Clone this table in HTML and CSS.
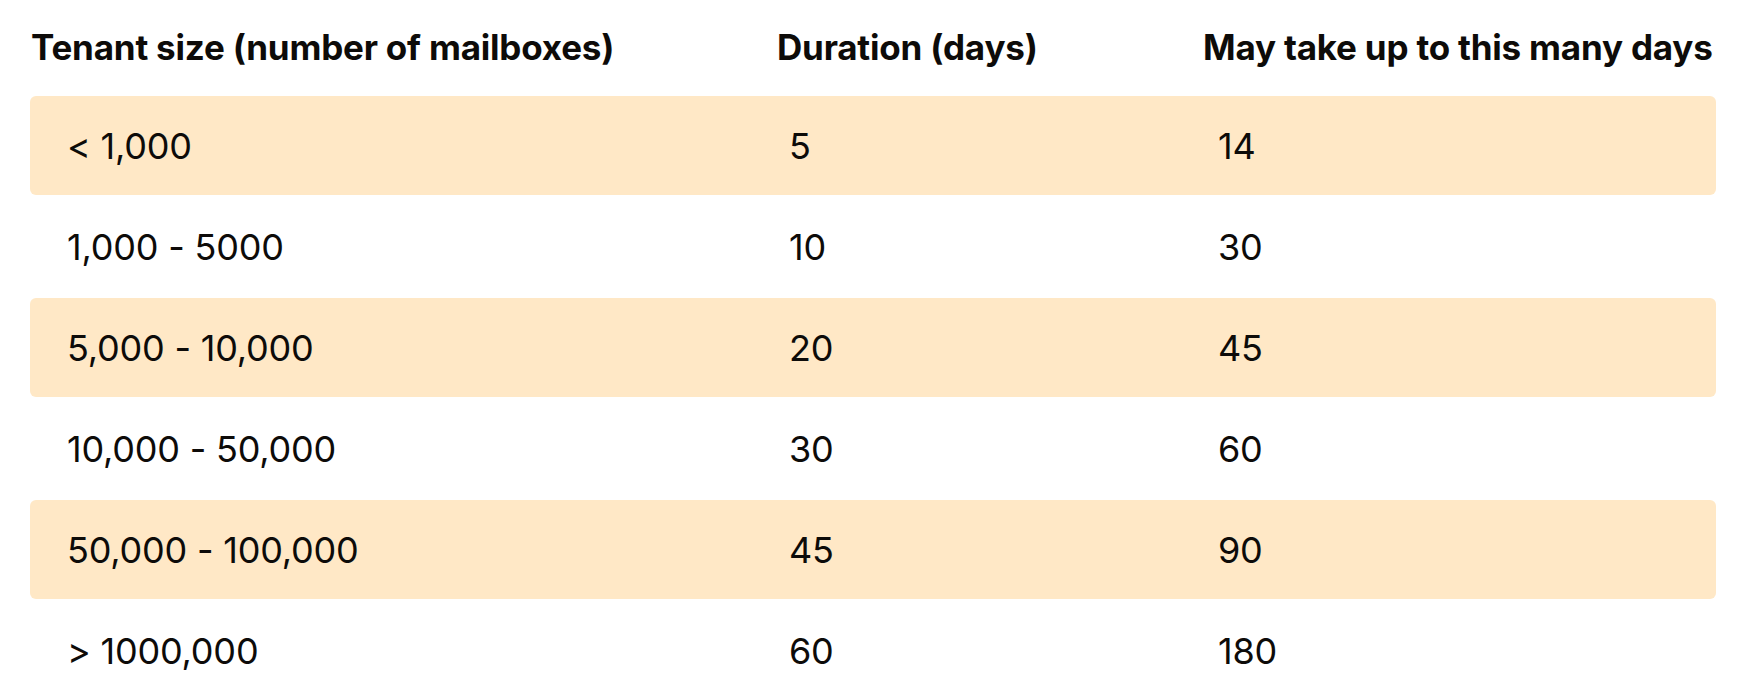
FILE: index.html
```html
<!DOCTYPE html>
<html lang="en">
<head>
<meta charset="utf-8">
<title>Tenant size durations</title>
<link rel="stylesheet" href="styles.css">
</head>
<body>
<div class="table">
  <div class="head">
    <div class="th">Tenant size (number of mailboxes)</div>
    <div class="th">Duration (days)</div>
    <div class="th">May take up to this many days</div>
  </div>
  <div class="row alt"><div>&lt; 1,000</div><div>5</div><div>14</div></div>
  <div class="row"><div>1,000 - 5000</div><div>10</div><div>30</div></div>
  <div class="row alt"><div>5,000 - 10,000</div><div>20</div><div>45</div></div>
  <div class="row"><div>10,000 - 50,000</div><div>30</div><div>60</div></div>
  <div class="row alt"><div>50,000 - 100,000</div><div>45</div><div>90</div></div>
  <div class="row"><div>&gt; 1000,000</div><div>60</div><div>180</div></div>
</div>
</body>
</html>
```

FILE: styles.css
```css
html, body {
  margin: 0;
  padding: 0;
  background: #ffffff;
}
body {
  font-family: Inter, Roboto, "Liberation Sans", sans-serif;
  color: #0d0b09;
}
.table {
  width: 1686px;
  margin-left: 30px;
  display: flex;
  flex-direction: column;
  gap: 2px;
}
.head {
  height: 94px;
  display: grid;
  grid-template-columns: 746px 426px 1fr;
  align-items: center;
  padding-left: 1px;
  font-weight: 700;
  font-size: 35px;
  letter-spacing: -0.2px;
  white-space: nowrap;
}
.row {
  height: 99px;
  display: grid;
  grid-template-columns: 722px 429px 1fr;
  align-items: center;
  padding-left: 37px;
  font-size: 36px;
  letter-spacing: -0.2px;
  border-radius: 6px;
  white-space: nowrap;
}
.row.alt {
  background: #ffe8c6;
}
```
